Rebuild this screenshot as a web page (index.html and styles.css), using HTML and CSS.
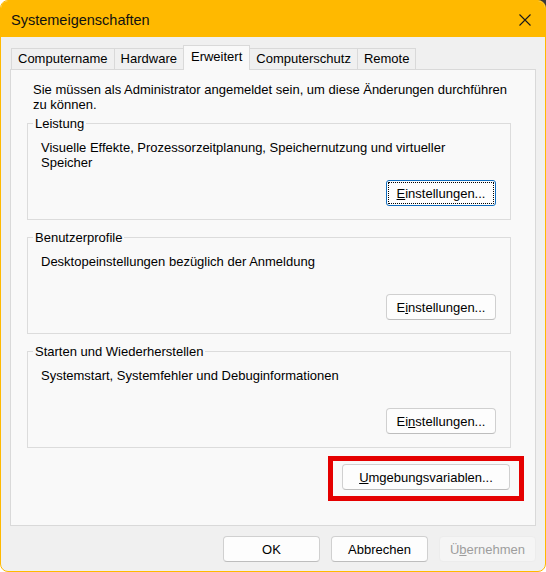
FILE: index.html
```html
<!DOCTYPE html>
<html lang="de">
<head>
<meta charset="utf-8">
<title>Systemeigenschaften</title>
<link rel="stylesheet" href="styles.css">
</head>
<body>
<div class="window">
  <div class="titlebar">
    <span class="title">Systemeigenschaften</span>
    <span class="close">
      <svg width="12" height="12" viewBox="0 0 12 12"><path d="M0.5 0.5 L11.5 11.5 M11.5 0.5 L0.5 11.5" stroke="#1a1a1a" stroke-width="1.1" fill="none"/></svg>
    </span>
  </div>
  <div class="content">
    <div class="tabs">
      <div class="tab">Computername</div>
      <div class="tab">Hardware</div>
      <div class="tab active">Erweitert</div>
      <div class="tab">Computerschutz</div>
      <div class="tab">Remote</div>
    </div>
    <div class="panel">
      <p class="intro">Sie müssen als Administrator angemeldet sein, um diese Änderungen durchführen zu können.</p>
      <div class="group first">
        <div class="legend">Leistung</div>
        <div class="desc">Visuelle Effekte, Prozessorzeitplanung, Speichernutzung und virtueller Speicher</div>
        <div class="actions"><button class="btn focus"><u>E</u>instellungen...</button></div>
      </div>
      <div class="group">
        <div class="legend">Benutzerprofile</div>
        <div class="desc">Desktopeinstellungen bezüglich der Anmeldung</div>
        <div class="actions"><button class="btn">E<u>i</u>nstellungen...</button></div>
      </div>
      <div class="group">
        <div class="legend">Starten und Wiederherstellen</div>
        <div class="desc">Systemstart, Systemfehler und Debuginformationen</div>
        <div class="actions"><button class="btn">Ei<u>n</u>stellungen...</button></div>
      </div>
      <div class="env-row">
        <div class="env-wrap"><button class="btn env"><u>U</u>mgebungsvariablen...</button></div>
      </div>
    </div>
    <div class="footer">
      <button class="btn foot">OK</button>
      <button class="btn foot">Abbrechen</button>
      <button class="btn foot disabled">Ü<u>b</u>ernehmen</button>
    </div>
  </div>
</div>
</body>
</html>
```
FILE: styles.css
```css
html, body {
  margin: 0;
  padding: 0;
}
body {
  background: linear-gradient(to right, #ffffff 50%, #3a3a3a 50%) top / 100% 10px no-repeat, #ffffff;
  font-family: "Liberation Sans", Arial, sans-serif;
  font-size: 13px;
  color: #000;
}
.window {
  width: 546px;
  height: 572px;
  box-sizing: border-box;
  border: 1px solid #ffb900;
  border-radius: 8px;
  overflow: hidden;
  background: #f0f0f0;
  display: flex;
  flex-direction: column;
}
.titlebar {
  height: 36px;
  flex: none;
  background: #ffb900;
  display: flex;
  align-items: center;
  justify-content: space-between;
  padding: 0 14px 0 10px;
}
.title {
  font-size: 14.5px;
  line-height: 18px;
  margin-top: 1px;
  color: #111;
}
.close {
  display: flex;
  width: 12px;
  height: 12px;
  margin-top: 2px;
}
.content {
  flex: 1;
  display: flex;
  flex-direction: column;
  padding: 8px 9px 9px 9px;
  min-height: 0;
}
.tabs {
  display: flex;
  align-items: flex-end;
  height: 24px;
  padding-left: 2px;
  flex: none;
}
.tab {
  height: 21px;
  box-sizing: border-box;
  border: 1px solid #d9d9d9;
  border-bottom: none;
  padding: 0 6px;
  margin-left: -1px;
  line-height: 20px;
  background: #f0f0f0;
  white-space: nowrap;
}
.tab.active {
  height: 25px;
  margin-bottom: -1px;
  padding: 1px 7px 0 7px;
  background: #f9f9f9;
  position: relative;
  z-index: 1;
}
.panel {
  flex: 1;
  border: 1px solid #d9d9d9;
  background: #f9f9f9;
  padding: 12px 24px 0 16px;
  display: flex;
  flex-direction: column;
  min-height: 0;
}
.intro {
  margin: 0 -7px 0 6px;
  line-height: 15px;
}
.group {
  border: 1px solid #dcdcdc;
  padding: 0 14px 13px 13px;
  margin-top: 17px;
}
.group.first {
  margin-top: 11px;
}
.legend {
  display: table;
  margin: -8px 0 0 -8px;
  padding: 0 2px;
  line-height: 15px;
  background: #f9f9f9;
}
.desc {
  margin-top: 9px;
  height: 30px;
  line-height: 15px;
}
.actions {
  display: flex;
  justify-content: flex-end;
  margin-top: 10px;
}
.btn {
  font-family: "Liberation Sans", Arial, sans-serif;
  font-size: 13px;
  color: #000;
  height: 26px;
  box-sizing: border-box;
  background: #fdfdfd;
  border: 1px solid #d0d0d0;
  border-bottom-color: #bdbdbd;
  border-radius: 4px;
  padding: 0;
  margin: 0;
  white-space: nowrap;
}
.actions .btn {
  width: 110px;
}
.btn.focus {
  border: 1px solid #0f6cbd;
  border-radius: 3px;
  outline: 1px dotted #000;
  outline-offset: -3px;
}
.env-row {
  display: flex;
  justify-content: flex-end;
  margin-top: 16px;
  padding-right: 1px;
}
.env-wrap {
  position: relative;
}
.env-wrap::after {
  content: "";
  position: absolute;
  top: -8px;
  bottom: -11px;
  left: -14px;
  right: -14px;
  border: 5px solid #e50000;
  pointer-events: none;
}
.btn.env {
  width: 168px;
}
.footer {
  display: flex;
  justify-content: flex-end;
  gap: 11px;
  margin-top: 10px;
  flex: none;
}
.btn.foot {
  width: 97px;
}
.btn.disabled {
  color: #9d9d9d;
  background: #f5f5f5;
  border-color: #ececec;
}
```
